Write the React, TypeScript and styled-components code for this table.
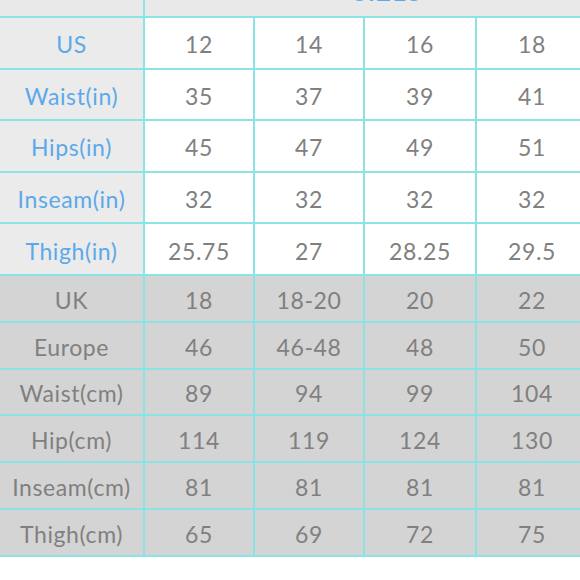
import React from 'react';
import styled, { createGlobalStyle } from 'styled-components';

const GlobalStyle = createGlobalStyle`
  html, body {
    margin: 0;
    padding: 0;
    background: #ffffff;
    overflow: hidden;
  }
  body {
    font-family: Lato, "Open Sans", sans-serif;
  }
`;

const Page = styled.div`
  width: 580px;
  height: 580px;
  overflow: hidden;
`;

const Chart = styled.div`
  display: grid;
  grid-template-columns: 143px 108px 108px 110px 110px;
  grid-template-rows: 50px repeat(5, 49.6px) repeat(6, 44.8px);
  gap: 2px;
  width: 587px;
  margin-top: -34px;
  padding-bottom: 2px;
  background: #8ae3e4;
`;

type Tone = 'head' | 'label' | 'plain' | 'shade';

const backgrounds: Record<Tone, string> = {
  head: '#e9e9e9',
  label: '#ebebeb',
  plain: '#ffffff',
  shade: '#d4d4d4',
};

const Cell = styled.div<{ $tone: Tone; $blue?: boolean }>`
  display: flex;
  align-items: center;
  justify-content: center;
  padding-top: 3px;
  background: ${p => backgrounds[p.$tone]};
  color: ${p => (p.$blue ? '#5ba9ea' : '#808080')};
  font-size: 23px;
  font-weight: 400;
  letter-spacing: 0.6px;
  white-space: nowrap;
`;

const HeadCell = styled(Cell)`
  grid-column: 2 / 6;
  align-items: flex-end;
  padding: 0 0 10px 44px;
  font-weight: 700;
  letter-spacing: 2px;
`;

const usRows: [string, string[]][] = [
  ['US', ['12', '14', '16', '18']],
  ['Waist(in)', ['35', '37', '39', '41']],
  ['Hips(in)', ['45', '47', '49', '51']],
  ['Inseam(in)', ['32', '32', '32', '32']],
  ['Thigh(in)', ['25.75', '27', '28.25', '29.5']],
];

const intlRows: [string, string[]][] = [
  ['UK', ['18', '18-20', '20', '22']],
  ['Europe', ['46', '46-48', '48', '50']],
  ['Waist(cm)', ['89', '94', '99', '104']],
  ['Hip(cm)', ['114', '119', '124', '130']],
  ['Inseam(cm)', ['81', '81', '81', '81']],
  ['Thigh(cm)', ['65', '69', '72', '75']],
];

const App = () => (
  <>
    <GlobalStyle />
    <Page>
      <Chart>
        <Cell $tone="head" />
        <HeadCell $tone="head" $blue>
          SIZES
        </HeadCell>
        {usRows.map(([label, values]) => (
          <React.Fragment key={label}>
            <Cell $tone="label" $blue>
              {label}
            </Cell>
            {values.map((v, i) => (
              <Cell key={i} $tone="plain">
                {v}
              </Cell>
            ))}
          </React.Fragment>
        ))}
        {intlRows.map(([label, values]) => (
          <React.Fragment key={label}>
            <Cell $tone="shade">{label}</Cell>
            {values.map((v, i) => (
              <Cell key={i} $tone="shade">
                {v}
              </Cell>
            ))}
          </React.Fragment>
        ))}
      </Chart>
    </Page>
  </>
);

export default App;
